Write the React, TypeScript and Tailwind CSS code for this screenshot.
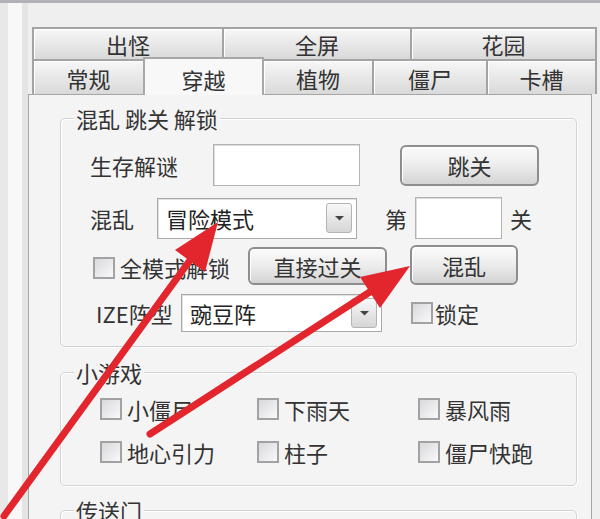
import React from "react";

function Tab({ label, w, first, selected, row2 }: any) {
  if (selected) {
    return (
      <div
        className={`relative z-10 -ml-[2px] -mb-[1px] h-[38px] ${w} flex items-center justify-center border-2 border-b-0 border-[#a8a8a8] bg-[#f8f8f8] pt-[4px]`}
      >
        {label}
      </div>
    );
  }
  return (
    <div
      className={`${first ? "" : "-ml-[2px]"} ${row2 ? "h-[35px] border-b-0" : "h-[34px]"} ${w} flex items-center justify-center border-2 border-[#a3a3a3] bg-linear-to-b from-[#f7f7f7] to-[#d9d9d9] shadow-[inset_1px_1px_0_#ffffff]`}
    >
      {label}
    </div>
  );
}

function Combo({ text, w, h }: any) {
  return (
    <div className={`${w} ${h} flex items-center justify-between border border-[#a9a9a9] bg-white shadow-[inset_1px_1px_0_#e2e2e2]`}>
      <span className="pl-[8px] text-[#222]">{text}</span>
      <div className="mr-[4px] flex h-[30px] w-[26px] items-center justify-center rounded-[3px] border border-[#b4b4b4] bg-linear-to-b from-[#f8f8f8] to-[#d6d6d6]">
        <svg width="9" height="5" viewBox="0 0 9 5">
          <path d="M0 0 L9 0 L4.5 4.5 Z" fill="#444" />
        </svg>
      </div>
    </div>
  );
}

function TextBox({ w, h }: any) {
  return <div className={`${w} ${h} border border-[#b3b3b3] bg-white shadow-[inset_1px_1px_0_#dcdcdc]`} />;
}

function Button({ label, w, h, cls = "" }: any) {
  return (
    <div
      className={`${w} ${h} ${cls} flex items-center justify-center rounded-[6px] border-2 border-[#8e8e8e] bg-linear-to-b from-[#fbfbfb] via-[#ececec] to-[#d4d4d4] shadow-[inset_1px_1px_0_#ffffff] text-[#333]`}
    >
      {label}
    </div>
  );
}

function Check({ cls = "" }: any) {
  return (
    <div
      className={`${cls} h-[22px] w-[22px] shrink-0 border-2 border-[#a2a2a2] bg-linear-to-br from-[#d9d9dc] to-[#f9f9fb]`}
    />
  );
}

function Group({ title, children, cls = "" }: any) {
  return (
    <fieldset
      className={`${cls} w-[517px] rounded-[5px] border border-[#d2d2d2] shadow-[inset_1px_1px_0_#ffffff,1px_1px_0_#ffffff]`}
    >
      <legend className="ml-[13px] bg-[#f4f4f4] px-[2px] leading-[24px]">{title}</legend>
      {children}
    </fieldset>
  );
}

export default function App() {
  return (
    <div className="relative flex h-[519px] w-[600px] flex-col overflow-hidden bg-[#efefef] text-[22px] leading-[24px] text-[#333] font-['Noto_Sans_CJK_SC',sans-serif]">
      <div className="h-[3px] shrink-0 bg-[#b2b2b6]" />
      <div className="flex flex-1">
        <div className="flex w-[28px] shrink-0">
          <div className="w-[8px] bg-[#e8e8e8]" />
          <div className="w-[14px] bg-[#f8f8f8]" />
          <div className="w-[6px] bg-[#e4e4e4]" />
        </div>
        <div className="flex flex-1 flex-col pt-[24px]">
          {/* tabs */}
          <div className="ml-[4px] flex">
            <Tab label="出怪" w="w-[192px]" first />
            <Tab label="全屏" w="w-[190px]" />
            <Tab label="花园" w="w-[187px]" />
          </div>
          <div className="ml-[4px] -mt-[2px] flex h-[35px] items-end">
            <Tab label="常规" w="w-[113px]" first row2 />
            <Tab label="穿越" w="w-[121px]" selected />
            <Tab label="植物" w="w-[112px]" row2 />
            <Tab label="僵尸" w="w-[116px]" row2 />
            <Tab label="卡槽" w="w-[111px]" row2 />
          </div>

          {/* panel */}
          <div className="flex w-[564px] flex-1 flex-col border-l border-t border-r border-[#a6a6a6] bg-[#f4f4f4] pl-[31px] pt-[11px]">
            <Group title="混乱 跳关 解锁">
              <div className="mt-[14px] flex h-[42px] items-center pl-[29px]">
                <span className="w-[123px]">生存解谜</span>
                <TextBox w="w-[147px]" h="h-[42px]" />
                <Button label="跳关" w="w-[139px]" h="h-[41px]" cls="ml-[40px]" />
              </div>
              <div className="mt-[11px] flex h-[42px] items-center pl-[29px]">
                <span className="w-[67px]">混乱</span>
                <Combo text="冒险模式" w="w-[200px]" h="h-[41px]" />
                <span className="ml-[28px]">第</span>
                <div className="ml-[8px]">
                  <TextBox w="w-[87px]" h="h-[42px]" />
                </div>
                <span className="ml-[8px]">关</span>
              </div>
              <div className="mt-[6px] flex h-[40px] items-center pl-[32px]">
                <Check cls="mt-[6px]" />
                <span className="ml-[5px] w-[110px] pt-[4px]">全模式解锁</span>
                <Button label="直接过关" w="w-[139px]" h="h-[38px]" cls="ml-[18px] mt-[2px]" />
                <Button label="混乱" w="w-[108px]" h="h-[40px]" cls="ml-[23px]" />
              </div>
              <div className="mt-[9px] flex h-[38px] items-center pl-[35px]">
                <span className="w-[85px]">IZE阵型</span>
                <Combo text="豌豆阵" w="w-[201px]" h="h-[38px]" />
                <Check cls="ml-[29px]" />
                <span className="ml-[2px]">锁定</span>
              </div>
              <div className="h-[14px]" />
            </Group>

            <Group title="小游戏" cls="mt-[13px]">
              <div className="mt-[10px] flex h-[30px] items-center pl-[39px]">
                <div className="flex w-[157px] items-center">
                  <Check />
                  <span className="ml-[5px]">小僵尸</span>
                </div>
                <div className="flex w-[161px] items-center">
                  <Check />
                  <span className="ml-[5px]">下雨天</span>
                </div>
                <div className="flex items-center">
                  <Check />
                  <span className="ml-[5px]">暴风雨</span>
                </div>
              </div>
              <div className="mt-[13px] flex h-[30px] items-center pl-[39px]">
                <div className="flex w-[157px] items-center">
                  <Check />
                  <span className="ml-[5px]">地心引力</span>
                </div>
                <div className="flex w-[161px] items-center">
                  <Check />
                  <span className="ml-[5px]">柱子</span>
                </div>
                <div className="flex items-center">
                  <Check />
                  <span className="ml-[5px]">僵尸快跑</span>
                </div>
              </div>
              <div className="h-[18px]" />
            </Group>

            <Group title="传送门" cls="mt-[12px]">
              <div className="h-[60px]" />
            </Group>
          </div>
        </div>
      </div>

      {/* red annotation arrows */}
      <svg className="pointer-events-none absolute left-0 top-0" width="600" height="519" viewBox="0 0 600 519">
        <g stroke="#e3262d" strokeWidth="7" strokeLinecap="round" fill="#e3262d">
          <line x1="4" y1="516" x2="196" y2="252" />
          <line x1="150" y1="434" x2="376" y2="288" />
        </g>
        <g fill="#e3262d">
          <path d="M218 222 L205 272 L175 250 Z" />
          <path d="M410 266 L380 308 L360 277 Z" />
        </g>
      </svg>
    </div>
  );
}
